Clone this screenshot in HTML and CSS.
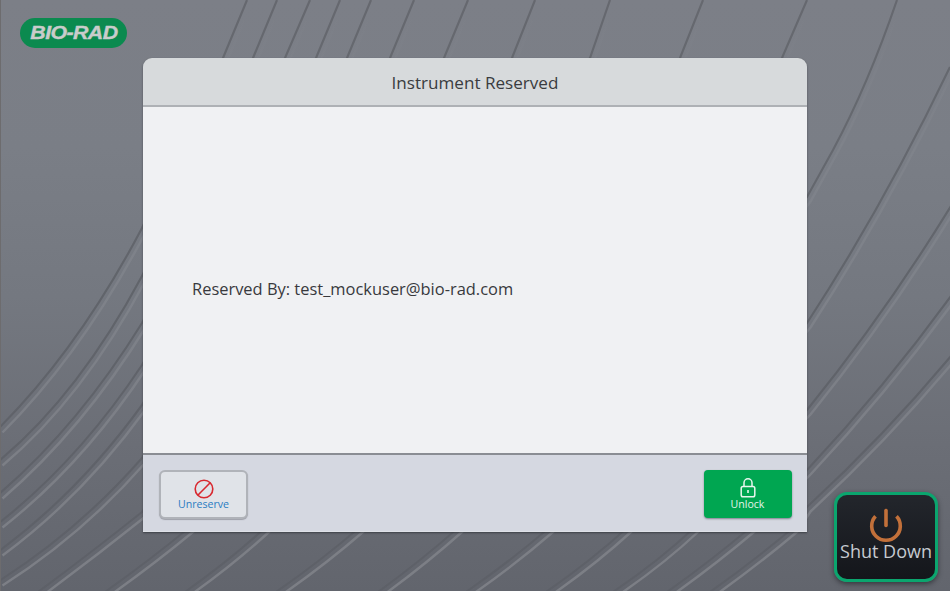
FILE: index.html
```html
<!DOCTYPE html>
<html lang="en">
<head>
<meta charset="utf-8">
<title>Instrument Reserved</title>
<link rel="stylesheet" href="styles.css">
</head>
<body>
<div class="screen">
  <svg class="backdrop" viewBox="0 0 950 591" aria-hidden="true">
    <defs>
      <linearGradient id="shade" gradientUnits="userSpaceOnUse" x1="0" y1="0" x2="0" y2="591">
        <stop offset="0" stop-color="#000" stop-opacity=".18"/>
        <stop offset=".5" stop-color="#000" stop-opacity=".17"/>
        <stop offset="1" stop-color="#000" stop-opacity=".05"/>
      </linearGradient>
      <linearGradient id="gleam" gradientUnits="userSpaceOnUse" x1="0" y1="0" x2="0" y2="591">
        <stop offset="0" stop-color="#fff" stop-opacity="0"/>
        <stop offset=".2" stop-color="#fff" stop-opacity=".03"/>
        <stop offset=".6" stop-color="#fff" stop-opacity=".09"/>
        <stop offset="1" stop-color="#fff" stop-opacity=".17"/>
      </linearGradient>
      <g id="arcs" fill="none">
        <path d="M-1,428 Q79,348 142,228 L223,58 L247,0"/>
        <path d="M-1,461 Q79,394 142,276 L253,58 L277,0"/>
        <path d="M-1,494 Q79,425 142,323 L285,58 L310,0"/>
        <path d="M-1,523 Q79,460 142,365 L316,58 L340,0"/>
        <path d="M-1,551 Q79,492 142,405 L347,58 L371,0"/>
        <path d="M-1,581 Q79,530 142,458 L390,58 L414,0"/>
        <path d="M38,592 Q92,552 142,512 L444,58 L468,0"/>
        <path d="M105,592 Q150,560 190,527 L512,58 L535,0"/>
        <path d="M185,592 Q230,560 266,527 L590,58 L610,0"/>
        <path d="M276,592 Q322,560 360,527 L680,58 L703,0"/>
        <path d="M378,592 Q422,560 459,527 L782,58 L807,0"/>
        <path d="M466,592 Q512,560 550,527 L807,197 L833,150 Q868,85 897,0"/>
        <path d="M546,592 Q592,560 628,527 L807,323 Q884,205 950,67"/>
        <path d="M613,592 Q660,560 695,527 L807,410 Q884,315 951,206"/>
        <path d="M667,592 Q712,560 751,527 L807,470 Q884,388 951,296"/>
        <path d="M710,592 Q755,560 794,527 L807,507 Q884,436 951,356"/>
      </g>
    </defs>
    <use href="#arcs" stroke="url(#shade)" stroke-width="2.2"/>
    <use href="#arcs" transform="translate(3.5 4.5)" stroke="url(#gleam)" stroke-width="2.4"/>
  </svg>

  <header class="top-bar">
    <div class="logo"><span class="logo-word">BIO-RAD</span></div>
  </header>

  <main class="stage">
    <section class="dialog">
      <h1 class="dialog-title">Instrument Reserved</h1>
      <div class="dialog-body">
        <p class="reserved-by">Reserved By: test_mockuser@bio-rad.com</p>
      </div>
      <footer class="dialog-actions">
        <button class="action action-light" type="button">
          <svg class="action-icon" viewBox="0 0 22 22" aria-hidden="true">
            <circle cx="11" cy="11" r="8.8" fill="none" stroke="#d8282f" stroke-width="1.6"/>
            <path d="M4.8 17.2 17.2 4.8" stroke="#d8282f" stroke-width="1.6"/>
          </svg>
          <span>Unreserve</span>
        </button>
        <button class="action action-green" type="button">
          <svg class="action-icon" viewBox="0 0 22 22" aria-hidden="true">
            <path d="M7 9.5V5.8a4 4 0 0 1 8 0V9.5" fill="none" stroke="#e8f6ee" stroke-width="1.5"/>
            <rect x="4.2" y="9.5" width="13.6" height="10.3" rx="1.8" fill="none" stroke="#e8f6ee" stroke-width="1.5"/>
            <rect x="10.2" y="13" width="1.6" height="3" fill="#e8f6ee"/>
          </svg>
          <span>Unlock</span>
        </button>
      </footer>
    </section>
  </main>

  <button class="shutdown" type="button">
    <svg class="shutdown-icon" viewBox="0 0 36 36" aria-hidden="true">
      <path d="M7.5 8.3a14.3 14.3 0 1 0 21 0" fill="none" stroke="#c2703a" stroke-width="3.6"/>
      <path d="M18 2.5V17.5" fill="none" stroke="#c2703a" stroke-width="3.6" stroke-linecap="round"/>
    </svg>
    <span>Shut Down</span>
  </button>
</div>
</body>
</html>
```

FILE: styles.css
```css
* { box-sizing: border-box; }

html, body {
  margin: 0;
  height: 100%;
}

body {
  font-family: "Open Sans", "Noto Sans", sans-serif;
  overflow: hidden;
}

.screen {
  position: relative;
  width: 950px;
  height: 591px;
  overflow: hidden;
  padding: 18px 0 0 20px;
  background: linear-gradient(180deg, #7c7f87 0%, #7a7e86 25%, #747880 50%, #6b6e76 75%, #62656d 100%);
  border-left: 1px solid #6d6c6e;
}

.backdrop {
  position: absolute;
  inset: 0;
  width: 950px;
  height: 591px;
  margin-left: -1px;
}

.top-bar {
  position: relative;
  height: 40px;
}

.logo {
  width: 107px;
  height: 30px;
  border-radius: 15px;
  background: #0b8a4f;
  margin-left: -1px;
  display: flex;
  align-items: center;
  justify-content: center;
}

.logo-word {
  font-family: "Liberation Sans", Arial, sans-serif;
  font-weight: 700;
  font-style: italic;
  font-size: 19px;
  letter-spacing: -0.5px;
  color: #c9cccb;
  -webkit-text-stroke: .4px #c9cccb;
  transform: scaleX(1.12);
}

.stage {
  position: relative;
  margin-left: 122px;
}

.dialog {
  width: 664px;
  height: 474px;
  display: flex;
  flex-direction: column;
  border-radius: 9px 9px 0 0;
  overflow: hidden;
  box-shadow: 0 1px 2px rgba(30, 32, 38, .55);
}

.dialog-title {
  margin: 0;
  height: 49px;
  flex: none;
  background: #d7dadc;
  border-bottom: 2px solid #aeb1b5;
  color: #3a3c40;
  font-size: 17.1px;
  font-weight: 500;
  line-height: 50px;
  text-align: center;
}

.dialog-body {
  flex: 1;
  display: flex;
  align-items: center;
  padding: 0 49px 0;
  background: #f0f1f3;
}

.reserved-by {
  margin: 0 0 -17px;
  color: #38393d;
  font-size: 16.45px;
}

.dialog-actions {
  flex: none;
  height: 79px;
  display: flex;
  justify-content: space-between;
  padding: 15px 15.5px 0 16px;
  background: #d5d8e1;
  border-top: 2px solid #8a8d93;
  border-bottom: 1px solid #dfe1e7;
}

.action {
  width: 89px;
  height: 49px;
  padding: 7px 0 0;
  border-radius: 6px;
  display: flex;
  flex-direction: column;
  align-items: center;
  font-family: inherit;
  font-size: 10.6px;
  line-height: 13px;
}

.action-icon {
  width: 22px;
  height: 22px;
  flex: none;
  margin-bottom: -2px;
}

.action-light {
  background: #e0e3e8;
  color: #2a7cc2;
  border: 2px solid #b0b3b9;
  padding-top: 6px;
  box-shadow: 0 1px 1px rgba(90, 92, 100, .45);
}

.action-green {
  width: 88px;
  height: 48px;
  padding-top: 6.5px;
  gap: 1.5px;
  background: #00a651;
  color: #e4f4ea;
  border: 0;
  border-radius: 4px;
  box-shadow: 0 1px 2px rgba(70, 72, 90, .6);
}

.shutdown {
  position: absolute;
  left: 833px;
  top: 492px;
  width: 104px;
  height: 90px;
  padding: 0;
  border: 3px solid #0ba56e;
  border-radius: 13px;
  background: linear-gradient(180deg, #23262c 0%, #14161b 100%);
  box-shadow: 0 2px 5px rgba(25, 27, 32, .6);
  color: #c6cad0;
  font-family: inherit;
  font-size: 18px;
  line-height: 24px;
  display: flex;
  flex-direction: column;
  align-items: center;
}

.shutdown-icon {
  width: 36px;
  height: 36px;
  margin: 13px 0 -5px;
  flex: none;
}
```
